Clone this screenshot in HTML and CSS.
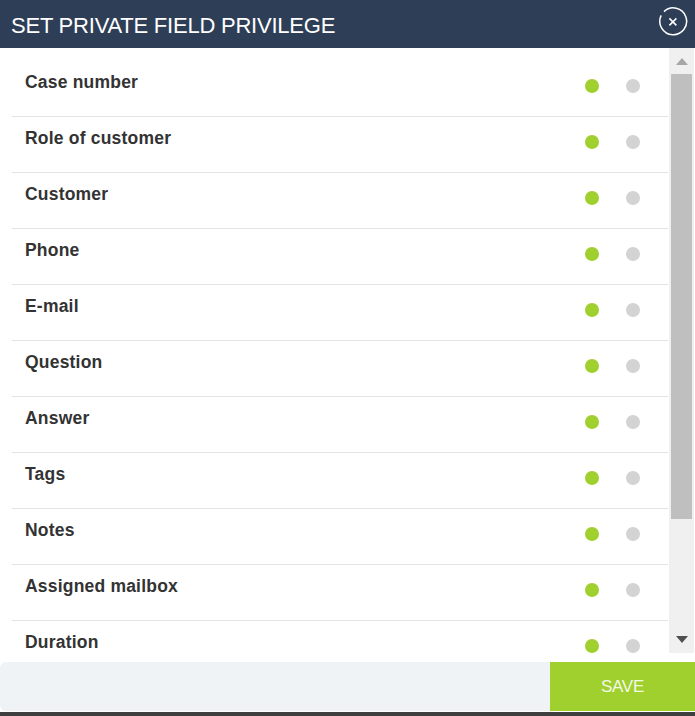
FILE: index.html
```html
<!DOCTYPE html>
<html lang="en">
<head>
    <meta charset="UTF-8">
    <title>Set private field privilege</title>
    <link rel="stylesheet" href="styles.css">
</head>
<body>
    <div class="dialog">
        <div class="header">
            <h2>SET PRIVATE FIELD PRIVILEGE</h2>
            <svg class="close" width="30" height="30" viewBox="0 0 30 30">
                <path d="M6 4.6A13.4 13.4 0 1 1 3.2 8.4" fill="none" stroke="#fff" stroke-width="1.5"/>
                <path d="M11.4 11.4l7 7M18.4 11.4l-7 7" fill="none" stroke="#fff" stroke-width="1.5"/>
            </svg>
        </div>
        <div class="content">
            <div class="list">
                <div class="row"><span class="name">Case number</span><span class="dot on"></span><span class="dot off"></span></div>
                <div class="row"><span class="name">Role of customer</span><span class="dot on"></span><span class="dot off"></span></div>
                <div class="row"><span class="name">Customer</span><span class="dot on"></span><span class="dot off"></span></div>
                <div class="row"><span class="name">Phone</span><span class="dot on"></span><span class="dot off"></span></div>
                <div class="row"><span class="name">E-mail</span><span class="dot on"></span><span class="dot off"></span></div>
                <div class="row"><span class="name">Question</span><span class="dot on"></span><span class="dot off"></span></div>
                <div class="row"><span class="name">Answer</span><span class="dot on"></span><span class="dot off"></span></div>
                <div class="row"><span class="name">Tags</span><span class="dot on"></span><span class="dot off"></span></div>
                <div class="row"><span class="name">Notes</span><span class="dot on"></span><span class="dot off"></span></div>
                <div class="row"><span class="name">Assigned mailbox</span><span class="dot on"></span><span class="dot off"></span></div>
                <div class="row"><span class="name">Duration</span><span class="dot on"></span><span class="dot off"></span></div>
            </div>
            <div class="scrollbar">
                <div class="arrow-up"></div>
                <div class="thumb"></div>
                <div class="arrow-down"></div>
            </div>
        </div>
        <div class="footer">
            <button class="save">SAVE</button>
        </div>
    </div>
</body>
</html>
```
FILE: styles.css
```css
html, body {
    height: 100%;
}
body {
    margin: 0;
    background-color: #3f3f3f;
    font-family: "Liberation Sans", Arial, sans-serif;
    overflow: hidden;
}
.dialog {
    width: 695px;
    height: 712px;
    background-color: #fff;
    display: flex;
    flex-direction: column;
}
.header {
    height: 48px;
    flex: none;
    background-color: #2e3e57;
    color: #fff;
    display: flex;
    justify-content: space-between;
    padding: 0 7px 0 11px;
    box-sizing: border-box;
}
.header h2 {
    margin: 0;
    font-size: 22px;
    font-weight: normal;
    letter-spacing: -0.22px;
    line-height: 52px;
}
.close {
    margin-top: 7px;
}
.content {
    height: 614px;
    flex: none;
    display: flex;
    overflow: hidden;
}
.list {
    width: 656px;
    margin-left: 12px;
    flex: none;
}
.row {
    height: 56px;
    box-sizing: border-box;
    border-bottom: 1px solid #e4e4e4;
    display: flex;
    align-items: flex-start;
    padding: 11px 28px 0 13px;
    gap: 27px;
}
.row:first-child {
    height: 69px;
    padding-top: 24px;
}
.name {
    flex: 1;
    font-size: 17.5px;
    font-weight: bold;
    letter-spacing: 0.2px;
    line-height: 20px;
    color: #333;
}
.dot {
    width: 14px;
    height: 14px;
    margin-top: 7px;
    border-radius: 50%;
}
.on {
    background-color: #9fd02e;
}
.off {
    background-color: #d3d3d3;
}
.scrollbar {
    width: 25px;
    height: 605px;
    margin-left: 1px;
    background-color: #f0f0f0;
    display: flex;
    flex-direction: column;
    align-items: center;
}
.arrow-up {
    margin-top: 10px;
    border-left: 6px solid transparent;
    border-right: 6px solid transparent;
    border-bottom: 7px solid #a6a6a6;
}
.thumb {
    width: 21px;
    height: 445px;
    margin-top: 9px;
    background-color: #bfbfbf;
}
.arrow-down {
    margin-top: 117px;
    border-left: 6px solid transparent;
    border-right: 6px solid transparent;
    border-top: 7px solid #505050;
}
.footer {
    height: 49px;
    flex: none;
    background-color: #eff3f5;
    border-radius: 6px 0 0 6px;
    display: flex;
    justify-content: flex-end;
}
.save {
    width: 145px;
    border: none;
    background-color: #9fd02e;
    color: #f4f8e6;
    font-family: "Liberation Sans", Arial, sans-serif;
    font-size: 17px;
    letter-spacing: -0.3px;
    padding: 0;
}
```
